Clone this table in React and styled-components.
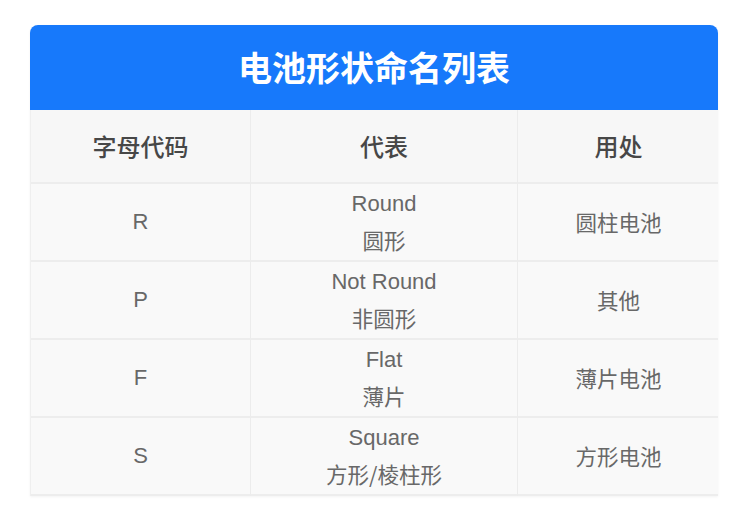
import React from "react";
import styled, { createGlobalStyle } from "styled-components";

const Global = createGlobalStyle`
  html, body { margin: 0; padding: 0; background: #ffffff; }
  body { font-family: "Noto Sans CJK SC", "Noto Sans", sans-serif; }
`;

const Page = styled.div`
  width: 750px;
  height: 525px;
  padding: 25px 32px 0 30px;
  box-sizing: border-box;
  background: #fff;
`;

const Card = styled.div`
  width: 688px;
  border-radius: 8px 8px 0 0;
  overflow: hidden;
  box-shadow: 0 1px 3px rgba(0, 0, 0, 0.05);
`;

const Title = styled.div`
  height: 85px;
  background: #1779fb;
  color: #fff;
  display: flex;
  align-items: center;
  justify-content: center;
  font-size: 34px;
  font-weight: 700;
  padding-bottom: 2px;
  box-sizing: border-box;
`;

const Grid = styled.div`
  display: grid;
  grid-template-columns: 220px 267px 201px;
  background: #f9f9f9;
  border-left: 1px solid #efefef;
  border-right: 1px solid #efefef;
  box-sizing: border-box;
`;

const Cell = styled.div`
  height: ${(p) => (p.$head ? 74 : 78)}px;
  box-sizing: border-box;
  display: flex;
  flex-direction: column;
  align-items: center;
  justify-content: center;
  border-bottom: 2px solid #ededed;
  border-right: ${(p) => (p.$last ? "none" : "1px solid #ececec")};
  background: ${(p) => (p.$head ? "#f7f7f7" : "#f9f9f9")};
  color: ${(p) => (p.$head ? "#474747" : "#686868")};
  font-size: ${(p) => (p.$head ? 24 : 21.5)}px;
  font-weight: ${(p) => (p.$head ? 500 : 400)};
  line-height: 36px;
`;

const Line = styled.span`
  display: block;
  font-family: ${(p) => (p.$latin ? '"Liberation Sans", "Noto Sans CJK SC", sans-serif' : '"Noto Sans CJK SC", sans-serif')};
  font-size: ${(p) => (p.$latin ? "22px" : "inherit")};
`;

const rows = [
  ["R", "Round", "圆形", "圆柱电池"],
  ["P", "Not Round", "非圆形", "其他"],
  ["F", "Flat", "薄片", "薄片电池"],
  ["S", "Square", "方形/棱柱形", "方形电池"],
];

export default function App() {
  return (
    <Page>
      <Global />
      <Card>
        <Title>电池形状命名列表</Title>
        <Grid>
          <Cell $head>字母代码</Cell>
          <Cell $head>代表</Cell>
          <Cell $head $last>用处</Cell>
          {rows.map(([code, en, zh, use]) => (
            <React.Fragment key={code}>
              <Cell>
                <Line $latin>{code}</Line>
              </Cell>
              <Cell>
                <Line $latin>{en}</Line>
                <Line>{zh}</Line>
              </Cell>
              <Cell $last>
                <Line>{use}</Line>
              </Cell>
            </React.Fragment>
          ))}
        </Grid>
      </Card>
    </Page>
  );
}
